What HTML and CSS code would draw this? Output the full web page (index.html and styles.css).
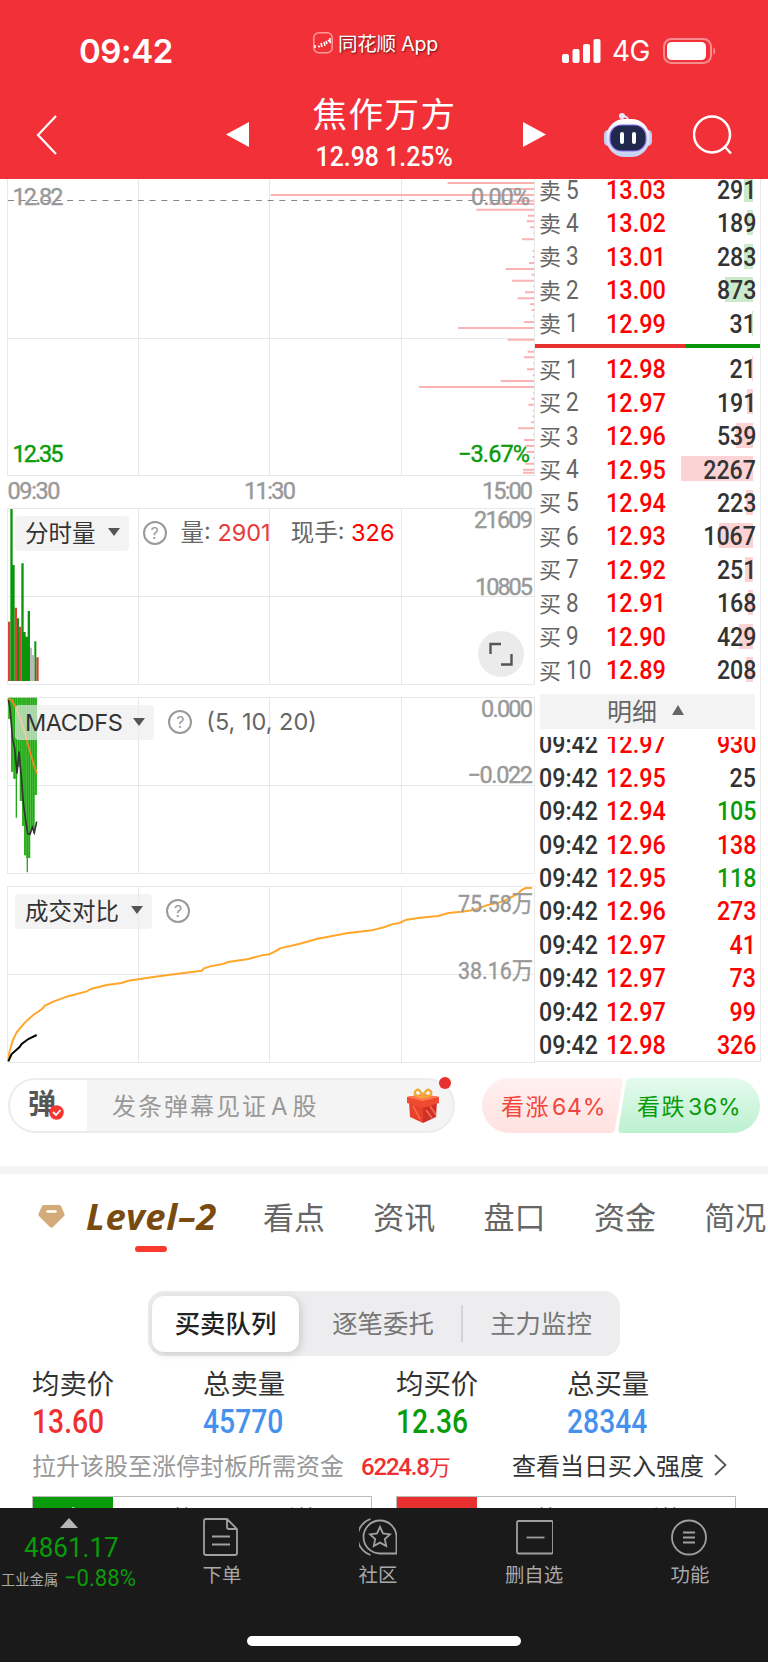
FILE: index.html
```html
<!DOCTYPE html>
<html lang="zh-CN">
<head>
    <meta charset="UTF-8">
    <meta name="viewport" content="width=device-width, initial-scale=1.0">
    <title>焦作万方</title>
    <link rel="stylesheet" href="styles.css">
</head>
<body>
    <header class="header">
        <div class="status">
            <div class="clock">09:42</div>
            <div class="app-name">
                <svg width="20" height="22" viewBox="0 0 20 22" fill="none" stroke="#fff">
                    <rect x=".8" y=".8" width="18.4" height="20" rx="5" stroke="#ff9a9c" stroke-width="1.5"/>
                    <path d="M2 13v3M5 14l2 1M8 11l1 4M11 10l1 4M13 9l1 3M17 6v4M15 8l3 3" stroke-width="1.6"/>
                </svg>
                <span>同花顺 App</span>
            </div>
            <div class="signal">
                <svg width="39" height="24" viewBox="0 0 39 24" fill="#fff">
                    <rect x="0" y="15" width="7" height="9" rx="2"/>
                    <rect x="10.5" y="10" width="7" height="14" rx="2"/>
                    <rect x="21" y="5" width="7" height="19" rx="2"/>
                    <rect x="31.5" y="0" width="7" height="24" rx="2"/>
                </svg>
                <span>4G</span>
                <svg width="53" height="26" viewBox="0 0 53 26">
                    <rect x="1" y="1" width="47" height="24" rx="7.5" fill="none" stroke="#fff" stroke-opacity=".45" stroke-width="2"/>
                    <rect x="4" y="4" width="39" height="18" rx="4.5" fill="#fff"/>
                    <path d="M50.500 9q3 4 0 8z" fill="#fff" fill-opacity=".6"/>
                </svg>
            </div>
        </div>
        <nav class="nav">
            <svg class="back" width="22" height="40" viewBox="0 0 22 40" fill="none" stroke="#fff" stroke-width="2.2"><path d="M20 1L2 20l18 19"/></svg>
            <svg class="prev" width="23" height="25" viewBox="0 0 23 25" fill="#fff"><path d="M23 0v25L0 12.500z"/></svg>
            <div class="stock">
                <h1>焦作万方</h1>
                <div class="quote num">12.98 1.25%</div>
            </div>
            <svg class="next" width="23" height="25" viewBox="0 0 23 25" fill="#fff"><path d="M0 0v25l23-12.500z"/></svg>
            <svg class="robot" width="48" height="44" viewBox="0 0 48 44">
                <defs>
                    <linearGradient id="head" x1="0" y1="0" x2="0" y2="1"><stop offset="0" stop-color="#fff"/><stop offset="1" stop-color="#c3d0f0"/></linearGradient>
                </defs>
                <path d="M24 9q1-6-6-6" fill="none" stroke="#dfe6fa" stroke-width="2"/>
                <circle cx="18" cy="3" r="3" fill="#e6ebfb"/>
                <rect x="0" y="17" width="9" height="16" rx="4.500" fill="#c3cdf0"/>
                <rect x="39" y="17" width="9" height="16" rx="4.500" fill="#c3cdf0"/>
                <rect x="2.500" y="6" width="43" height="38" rx="18" fill="url(#head)"/>
                <rect x="6" y="12" width="36" height="26" rx="11.500" fill="#20284d" stroke="#8a6cf0" stroke-width="1.200"/>
                <path d="M18 21v8M30 21v8" stroke="#fff" stroke-width="4" stroke-linecap="round"/>
            </svg>
            <svg class="search" width="42" height="42" viewBox="0 0 42 42" fill="none" stroke="#fff" stroke-width="2.500"><circle cx="19" cy="19.500" r="18"/><path d="M31 31l7 7.500"/></svg>
        </nav>
    </header>

    <main class="market">
        <section class="charts">
            <!-- price, with the volume distribution along the right edge -->
            <svg class="price-chart" width="535" height="329" viewBox="0 0 535 329">
                <path class="grid" d="M7.500 0V296.500H534.500V0M138.500 0V296M269.500 0V296M401.500 0V296M7.500 159.500H534"/>
                <path d="M8 21.500H534" stroke="#888" stroke-dasharray="6 5.800"/>
                <path transform="translate(370 -4) scale(.3333)" stroke="#fab2b2" stroke-width="6" d="M233 24H492M410 42H492M-298 60H492M415 77H492M357 87H492M319 104H492M474 122H492M470 139H492M481 157H492M490 175H492M456 193H492M488 228H492M488 246H492M477 264H492M407 282H492M485 299H492M426 317H492M490 334H492M465 352H492M443 370H492M480 388H492M485 405H492M490 423H492M462 441H492M264 459H492M413 494H492M473 530H492M462 547H492M490 565H492M471 583H492M488 601H492M392 618H492M147 636H492M490 654H492M485 671H492M475 689H492M490 707H492M488 724H492M484 742H492M444 760H492M490 778H492M462 795H492M466 813H492M470 831H492M489 849H492M465 866H492M459 884H492M459 893H492"/>
                <g class="axis">
                    <text x="12.500" y="25.500" textLength="51">12.82</text>
                    <text x="471" y="25.500" textLength="59">0.00%</text>
                    <text class="down" x="12.500" y="282.500" textLength="51">12.35</text>
                    <text class="down" x="458" y="282.500" textLength="72">−3.67%</text>
                    <text x="7.500" y="320" textLength="53">09:30</text>
                    <text x="244" y="320" textLength="52">11:30</text>
                    <text x="482" y="320" textLength="51">15:00</text>
                </g>
            </svg>

            <div class="panel">
                <svg width="535" height="177" viewBox="0 0 535 177">
                    <path class="grid" d="M7.500 .5H534.500V176.500H7.500zM138.500 0V176M269.500 0V176M401.500 0V176M7.500 88.500H534"/>
                    <g transform="translate(0 -8) scale(.3333)">
                        <path fill="#e03c38" d="M24 365h7v178h-7zM44 323h7v220h-7zM57 380h7v163h-7zM109 472h7v71h-7z"/>
                        <path fill="#0a960a" d="M31 27h7v516h-7zM38 195h6v348h-6zM51 355h6v188h-6zM64 190h7v353h-7zM71 396h6v147h-6zM77 410h6v133h-6zM83 333h7v210h-7zM103 424h6v119h-6z"/>
                        <path fill="#b9b9b9" d="M90 443h6v100h-6zM96 465h7v78h-7z"/>
                    </g>
                    <g class="axis">
                        <text x="474" y="19.500" textLength="59">21609</text>
                        <text x="475" y="86.500" textLength="58">10805</text>
                    </g>
                </svg>
                <div class="tools">
                    <button class="pick">分时量 <i></i></button>
                    <span class="help">?</span>
                    <span class="info">量: <b class="soft">2901</b></span>
                    <span class="info now">现手: <b>326</b></span>
                </div>
                <div class="expand">
                    <svg width="24" height="24" viewBox="0 0 24 24" fill="none" stroke="#555" stroke-width="2.400"><path d="M1.500 12V2H12M22.500 12v10.500H12"/></svg>
                </div>
            </div>

            <div class="panel">
                <svg width="535" height="177" viewBox="0 0 535 177">
                    <path class="grid" d="M7.500 .5H534.500V176.500H7.500zM138.500 0V176M269.500 0V176M401.500 0V176M7.500 88.500H534"/>
                    <g transform="translate(0 -197) scale(.3333)" fill="none">
                        <path fill="#52bf45" d="M24 593H111V885H104V990H91V1074H78V1066H72V977H66V903H59V800H52V836H40V815H33V657H24z"/>
                        <path stroke="#21a916" stroke-width="4" d="M30 593V657M36 593V815M43 593V836M49 593V953M56 593V800M62 593V903M69 593V977M75 593V1066M82 593V1117M88 593V1074M95 593V990M101 593V1000M108 593V885"/>
                        <path stroke="#333" stroke-width="5" d="M25 598L30 625 38 720 44 745 51 820 57 755 64 830 70 910 77 960 83 1001 90 1003 97 982 103 998 110 965"/>
                        <path stroke="#ff8518" stroke-width="5" d="M25 597L35 600 45 618 60 655 75 700 90 755 100 790 111 821"/>
                    </g>
                    <g class="axis">
                        <text x="481" y="19.500" textLength="52">0.000</text>
                        <text x="467.500" y="86" textLength="65.500">−0.022</text>
                    </g>
                </svg>
                <div class="tools">
                    <button class="pick latin">MACDFS <i></i></button>
                    <span class="help">?</span>
                    <span class="info">(5, 10, 20)</span>
                </div>
            </div>

            <div class="panel">
                <svg width="535" height="177" viewBox="0 0 535 177">
                    <path class="grid" d="M7.500 .5H534.500V176.500H7.500zM138.500 0V176M269.500 0V176M401.500 0V176M7.500 88.500H534"/>
                    <g transform="translate(0 -15.300) scale(.3333)" fill="none" stroke-width="6">
                        <path stroke="#ffa62b" d="M25 570L28 545 38 510 50 485 75 455 100 433 125 416 135 405 160 393 200 378 260 362 275 354 320 343 365 337 385 330 455 320 510 312 605 300 612 293 630 287 665 281 685 274 745 265 785 254 808 251 830 240 840 233 900 219 950 205 1040 188 1115 179 1155 169 1175 161 1198 157 1220 147 1260 141 1315 136 1345 127 1385 123 1425 117 1460 104 1510 92 1555 68 1565 58 1577 52 1596 52"/>
                        <path stroke="#000" d="M25 572L35 550 58 530 65 520 85 505 110 493"/>
                    </g>
                    <g class="axis">
                        <text x="458" y="26" textLength="75" lengthAdjust="spacingAndGlyphs">75.58万</text>
                        <text x="458" y="92.500" textLength="75" lengthAdjust="spacingAndGlyphs">38.16万</text>
                    </g>
                </svg>
                <div class="tools">
                    <button class="pick">成交对比 <i></i></button>
                    <span class="help">?</span>
                </div>
            </div>
        </section>

        <aside class="book">
            <div class="asks">
                <div class="row"><label>卖<span>5</span></label><b class="num">13.03</b><em class="num">291</em><i style="width:9px"></i></div>
                <div class="row"><label>卖<span>4</span></label><b class="num">13.02</b><em class="num">189</em><i style="width:6px"></i></div>
                <div class="row"><label>卖<span>3</span></label><b class="num">13.01</b><em class="num">283</em><i style="width:9px"></i></div>
                <div class="row"><label>卖<span>2</span></label><b class="num">13.00</b><em class="num">873</em><i style="width:28px"></i></div>
                <div class="row"><label>卖<span>1</span></label><b class="num">12.99</b><em class="num">31</em><i style="width:1px"></i></div>
            </div>
            <div class="ratio"></div>
            <div class="bids">
                <div class="row"><label>买<span>1</span></label><b class="num">12.98</b><em class="num">21</em><i style="width:1px"></i></div>
                <div class="row"><label>买<span>2</span></label><b class="num">12.97</b><em class="num">191</em><i style="width:6px"></i></div>
                <div class="row"><label>买<span>3</span></label><b class="num">12.96</b><em class="num">539</em><i style="width:17px"></i></div>
                <div class="row"><label>买<span>4</span></label><b class="num">12.95</b><em class="num">2267</em><i style="width:72px"></i></div>
                <div class="row"><label>买<span>5</span></label><b class="num">12.94</b><em class="num">223</em><i style="width:7px"></i></div>
                <div class="row"><label>买<span>6</span></label><b class="num">12.93</b><em class="num">1067</em><i style="width:34px"></i></div>
                <div class="row"><label>买<span>7</span></label><b class="num">12.92</b><em class="num">251</em><i style="width:8px"></i></div>
                <div class="row"><label>买<span>8</span></label><b class="num">12.91</b><em class="num">168</em><i style="width:5px"></i></div>
                <div class="row"><label>买<span>9</span></label><b class="num">12.90</b><em class="num">429</em><i style="width:14px"></i></div>
                <div class="row"><label>买<span>10</span></label><b class="num">12.89</b><em class="num">208</em><i style="width:7px"></i></div>
            </div>
            <div class="detail-head">明细 <i></i></div>
            <div class="ticks">
                <div class="row"><label class="num">09:42</label><b class="num">12.97</b><em class="num up">930</em></div>
                <div class="row"><label class="num">09:42</label><b class="num">12.95</b><em class="num">25</em></div>
                <div class="row"><label class="num">09:42</label><b class="num">12.94</b><em class="num fall">105</em></div>
                <div class="row"><label class="num">09:42</label><b class="num">12.96</b><em class="num up">138</em></div>
                <div class="row"><label class="num">09:42</label><b class="num">12.95</b><em class="num fall">118</em></div>
                <div class="row"><label class="num">09:42</label><b class="num">12.96</b><em class="num up">273</em></div>
                <div class="row"><label class="num">09:42</label><b class="num">12.97</b><em class="num up">41</em></div>
                <div class="row"><label class="num">09:42</label><b class="num">12.97</b><em class="num up">73</em></div>
                <div class="row"><label class="num">09:42</label><b class="num">12.97</b><em class="num up">99</em></div>
                <div class="row"><label class="num">09:42</label><b class="num">12.98</b><em class="num up">326</em></div>
            </div>
        </aside>
    </main>

    <section class="social">
        <div class="danmu">
            <div class="danmu-switch">弹
                <svg class="check" width="15" height="15" viewBox="0 0 15 15"><circle cx="7.500" cy="7.500" r="7.300" fill="#f5372f"/><path d="M4 7l3 3 4.500-5" fill="none" stroke="#fff" stroke-width="1.800"/></svg>
            </div>
            <div class="danmu-input">发条弹幕见证<span>A</span>股</div>
            <svg class="gift" width="34" height="36" viewBox="0 0 34 36">
                <path d="M3 13l14 4v18L4 29z" fill="#e8402c"/>
                <path d="M31 13l-14 4v18l13-6z" fill="#cf2f28"/>
                <path d="M1 9l16-3 16 3v6l-16 5L1 15z" fill="#f04a31"/>
                <path d="M1 9l16-3 16 3-16 4z" fill="#ff7a4f"/>
                <path d="M7 18l7 13M20 22l6 8M24 18l6 9" stroke="#f5724d" stroke-width="1.500"/>
                <path d="M17 9C11 9 7 6 9.500 3s6 0 7.500 6c1.500-6 5-9 7.500-6S23 9 17 9z" fill="none" stroke="#f0ab35" stroke-width="2.400"/>
            </svg>
            <span class="dot"></span>
        </div>
        <div class="vote">
            <svg class="vote-bg" width="278" height="55" viewBox="0 0 278 55">
                <defs>
                    <linearGradient id="bull" x1="0" y1="0" x2="0" y2="1"><stop offset="0" stop-color="#fff1f0"/><stop offset="1" stop-color="#ffe2e0"/></linearGradient>
                    <linearGradient id="bear" x1="0" y1="0" x2="0" y2="1"><stop offset="0" stop-color="#e4fbee"/><stop offset="1" stop-color="#bdf0d0"/></linearGradient>
                </defs>
                <path fill="url(#bull)" d="M27.500 0H137q4 0 3.500 4L133 51q-1 4-5 4H27.500a27.500 27.500 0 0 1 0-55z"/>
                <path fill="url(#bear)" d="M149 0H250.500a27.500 27.500 0 0 1 0 55H140q-4 0-3.500-4L144 4q1-4 5-4z"/>
            </svg>
            <span class="bull">看涨<small>64%</small></span>
            <span class="bear">看跌<small>36%</small></span>
        </div>
    </section>

    <section class="level">
        <div class="tabs">
            <svg width="27" height="24" viewBox="0 0 27 24"><path d="M6 0H21q1 0 2 1l3.500 8q.500 1-.500 2L15 22q-1.500 1.500-3 0L1 11q-1-1-.500-2L4 1q1-1 2-1z" fill="#d2ab78"/><path d="M9.500 6.500h8" stroke="#fff" stroke-width="2.400" stroke-linecap="round"/></svg>
            <a class="tab-level">Level–2</a>
            <a>看点</a>
            <a>资讯</a>
            <a>盘口</a>
            <a>资金</a>
            <a>简况</a>
        </div>
        <div class="segment">
            <a class="active">买卖队列</a>
            <a class="middle">逐笔委托</a>
            <a class="last">主力监控</a>
        </div>
        <div class="stats">
            <div><p>均卖价</p><span class="num sell-price">13.60</span></div>
            <div><p>总卖量</p><span class="num total">45770</span></div>
            <div><p>均买价</p><span class="num buy-price">12.36</span></div>
            <div><p>总买量</p><span class="num total">28344</span></div>
        </div>
        <div class="limit">
            <span>拉升该股至涨停封板所需资金</span>
            <b>6224.8<u>万</u></b>
            <a>查看当日买入强度</a>
            <svg width="13" height="24" viewBox="0 0 13 24" fill="none" stroke="#555" stroke-width="1.800"><path d="M1 2l10.500 10L1 22"/></svg>
        </div>
        <div class="queues">
            <div class="queue"><span class="side sell">卖</span><span class="q1">笔</span><span class="q2">手笔</span></div>
            <div class="queue"><span class="side buy"></span><span class="q1">笔</span><span class="q2">手笔</span></div>
        </div>
    </section>

    <footer class="bottom">
        <div class="menu">
            <div class="index">
                <i></i>
                <div class="num point">4861.17</div>
                <div class="sector"><span>工业金属</span><b class="num">−0.88%</b></div>
            </div>
            <div class="item">
                <svg width="38" height="38" viewBox="0 0 38 38"><path d="M3 1H24l10 10V35q0 2-2 2H3q-2 0-2-2V3q0-2 2-2zM24 1v8q0 2 2 2h8M9 18.500h18M9 26.500h18"/></svg>
                <span>下单</span>
            </div>
            <div class="item">
                <svg width="38" height="38" viewBox="0 0 38 38"><path d="M11.500 1a19 19 0 0 0 0 36M37.500 35.500V19A16.500 16.500 0 1 0 21 35.500z"/><path d="M21 9l3 6.500 7 .8-5.200 4.800 1.400 7L21 24.600l-6.200 3.500 1.400-7L11 16.300l7-.8z"/></svg>
                <span>社区</span>
            </div>
            <div class="item">
                <svg width="38" height="38" viewBox="0 0 38 38"><rect x="2" y="3" width="36" height="32.500" rx="1.500"/><path d="M11.500 19.500h18"/></svg>
                <span>删自选</span>
            </div>
            <div class="item">
                <svg width="38" height="38" viewBox="0 0 38 38"><circle cx="18" cy="19.500" r="17"/><path d="M12 14.500h12M12 19.500h12M12 24.500h12"/></svg>
                <span>功能</span>
            </div>
        </div>
        <div class="home-bar"></div>
    </footer>
</body>
</html>
```

FILE: styles.css
```css
* {
    box-sizing: border-box;
}
body {
    margin: 0;
    width: 768px;
    height: 1663px;
    overflow: hidden;
    background: #fff;
    color: #333;
    font-family: Inter, "Noto Sans CJK SC", sans-serif;
}
svg {
    display: block;
    flex: none;
}
i, em {
    font-style: normal;
}
.num {
    font-family: Roboto, "Noto Sans CJK SC", sans-serif;
    font-weight: 500;
}

/* header */
.header {
    height: 179px;
    background: #f23037;
    color: #fff;
}
.status {
    display: flex;
    align-items: flex-start;
    height: 90px;
    padding-left: 79px;
}
.clock {
    width: 234px;
    margin-top: 31px;
    font-size: 33px;
    line-height: 40px;
    font-weight: 600;
    letter-spacing: -.4px;
}
.app-name {
    display: flex;
    align-items: center;
    gap: 5px;
    width: 249px;
    margin-top: 31px;
    font-size: 19.500px;
    line-height: 26px;
    letter-spacing: -.2px;
    text-shadow: 1px 1px 2px rgba(0, 0, 0, .6);
    white-space: nowrap;
}
.app-name svg {
    margin-top: -2px;
}
.signal {
    display: flex;
    align-items: center;
    margin-top: 36px;
    height: 30px;
}
.signal span {
    width: 50px;
    padding-left: 11px;
    font-size: 28px;
    letter-spacing: -.5px;
}
.signal svg:last-child {
    margin-left: 12px;
}
.nav {
    display: flex;
    height: 89px;
    padding-left: 36px;
}
.back {
    margin-top: 25px;
}
.prev {
    margin: 32px 0 0 168px;
}
.stock {
    width: 274px;
    text-align: center;
}
.stock h1 {
    margin: 2px 0 0;
    padding-right: 3px;
    font-size: 34.500px;
    line-height: 46px;
    font-weight: 400;
    letter-spacing: 1.500px;
}
.quote {
    font-size: 27px;
    line-height: 30px;
    margin-top: 4px;
    padding-right: 4px;
    white-space: nowrap;
    transform: scaleX(.92);
}
.next {
    margin-top: 32px;
}
.robot {
    margin: 23px 0 0 58px;
}
.search {
    margin: 25px 0 0 41px;
}

/* charts */
.market {
    display: flex;
    height: 883px;
}
.charts {
    width: 535px;
    display: flex;
    flex-direction: column;
}
.price-chart {
    flex: none;
}
.grid {
    fill: none;
    stroke: #e8e8e8;
}
.axis text {
    font-family: Roboto, "Noto Sans CJK SC", sans-serif;
    font-size: 23.500px;
    fill: #999;
    stroke: #999;
    stroke-width: .4px;
}
.axis .down {
    fill: #0a9b0a;
    stroke: #0a9b0a;
}
.panel {
    position: relative;
    height: 177px;
    margin-bottom: 12px;
}
.tools {
    position: absolute;
    left: 15px;
    top: 7.500px;
    display: flex;
    align-items: center;
    height: 35px;
    white-space: nowrap;
}
.pick {
    display: flex;
    align-items: center;
    gap: 12px;
    height: 35px;
    padding: 0 9px 2px 10px;
    border: 0;
    border-radius: 4px;
    background: rgba(236, 236, 236, .65);
    color: #333;
    font: 23.500px Inter, "Noto Sans CJK SC", sans-serif;
}
.latin {
    gap: 11px;
    padding-bottom: 0;
    letter-spacing: -.4px;
}
.pick i {
    border: 6px solid transparent;
    border-top: 8px solid #555;
    border-bottom: 0;
}
.help {
    width: 24px;
    height: 24px;
    margin: 0 14px;
    border: 2px solid #999;
    border-radius: 50%;
    color: #999;
    font-size: 16px;
    line-height: 20px;
    text-align: center;
}
.info {
    color: #666;
    font-size: 23.500px;
    line-height: 32px;
}
.info b {
    color: #f00;
    font-weight: 400;
}
.info .soft {
    color: #e83a3a;
}
.now {
    margin-left: 20px;
}
.expand {
    position: absolute;
    right: 11px;
    bottom: 8px;
    display: flex;
    align-items: center;
    justify-content: center;
    width: 46px;
    height: 46px;
    border-radius: 50%;
    background: #ebebeb;
}

/* order book */
.book {
    width: 226px;
    border-right: 1px solid #e8e8e8;
    border-bottom: 1px solid #e8e8e8;
}
.asks, .ticks {
    display: flex;
    flex-direction: column;
    justify-content: flex-end;
    overflow: hidden;
}
.asks {
    height: 161px;
}
.ratio {
    height: 4px;
    margin: 4px 0;
    background: linear-gradient(to right, #e83030 150px, #0a960a 150px);
}
.row {
    position: relative;
    display: flex;
    flex: none;
    align-items: center;
    height: 33.440px;
    padding: 2px 4px 0 4px;
    font-size: 25.500px;
    line-height: 33px;
}
.row label {
    width: 67px;
    color: #333;
    transform: scaleX(.91);
    transform-origin: left;
}
.asks label, .bids label {
    color: #666;
    font-size: 22px;
    transform: none;
}
.row label span {
    display: inline-block;
    margin-left: 5px;
    font-family: Roboto, sans-serif;
    font-size: 25px;
    transform: scaleX(.9);
    transform-origin: left;
}
.row b {
    color: #f00;
    transform: scaleX(.92);
    transform-origin: left;
}
.row em {
    position: relative;
    z-index: 1;
    margin-left: auto;
    transform: scaleX(.91);
    transform-origin: right;
}
.row .up {
    color: #f00;
}
.row .fall {
    color: #0a9b0a;
}
/* size bar behind the volume */
.row i {
    position: absolute;
    right: 7px;
    top: 4px;
    height: 25px;
    background: #fbd3d5;
}
.asks i {
    background: #cbe9cb;
}
.detail-head {
    display: flex;
    align-items: center;
    gap: 15px;
    width: 215px;
    height: 35px;
    margin: 8px 0 8px 5px;
    padding: 0 0 3px 67px;
    background: #f3f3f3;
    color: #666;
    font-size: 25px;
}
.detail-head i {
    border: 6.500px solid transparent;
    border-top: 0;
    border-bottom: 10px solid #666;
}
.ticks {
    height: 324px;
}

/* danmu + vote */
.social {
    display: flex;
    justify-content: space-between;
    height: 112px;
    padding: 16px 8px 0;
    border-bottom: 8px solid #f3f3f3;
}
.danmu {
    position: relative;
    display: flex;
    align-items: center;
    width: 447px;
    height: 55px;
    border: 2px solid #ececec;
    border-radius: 28px;
    background: linear-gradient(to right, #fff 77px, #f4f4f4 77px);
}
.danmu-switch {
    position: relative;
    width: 77px;
    padding: 0 0 4px 18px;
    color: #555;
    font-size: 28px;
    line-height: 40px;
    font-weight: 700;
}
.check {
    position: absolute;
    left: 39px;
    top: 21px;
}
.danmu-input {
    flex: 1;
    padding: 0 0 2px 25px;
    color: #999;
    font-size: 24px;
    letter-spacing: 2px;
}
.danmu-input span {
    margin: 0 3px;
}
.gift {
    margin-right: 13px;
}
.dot {
    position: absolute;
    right: 2px;
    top: -3px;
    width: 12px;
    height: 12px;
    border-radius: 50%;
    background: #e83030;
}
.vote {
    position: relative;
    display: flex;
    align-items: center;
    width: 278px;
    height: 55px;
    padding-bottom: 2px;
    font-size: 23px;
    letter-spacing: 1.500px;
    white-space: nowrap;
}
.vote-bg {
    position: absolute;
    left: 0;
    top: 0;
}
.vote span {
    position: relative;
    padding-left: 19px;
}
.vote small {
    margin-left: 2px;
    font-size: 23px;
    letter-spacing: .8px;
}
.bull {
    width: 136px;
    color: #f5443c;
}
.bear {
    color: #0a9b0a;
}

/* level-2 */
.tabs {
    display: flex;
    align-items: center;
    height: 117px;
    padding: 0 0 34px 38px;
    white-space: nowrap;
}
.tabs a {
    width: 110.300px;
    color: #666;
    font-size: 31px;
    flex: none;
}
.tabs a:last-child {
    width: auto;
}
.tabs svg {
    margin-top: 2px;
}
.tabs .tab-level {
    position: relative;
    width: 198px;
    padding-left: 21px;
    color: #7a4b10;
    font-family: "Noto Sans", sans-serif;
    font-size: 36.500px;
    font-style: italic;
    font-weight: 700;
    letter-spacing: .7px;
}
.tab-level::after {
    content: "";
    position: absolute;
    left: 70px;
    bottom: -11px;
    width: 32px;
    height: 6px;
    border-radius: 3px;
    background: #fb3a2f;
}
.segment {
    display: flex;
    align-items: center;
    width: 472px;
    height: 65px;
    margin-left: 148px;
    padding: 4px;
    border-radius: 16px;
    background: #ededef;
    color: #777;
    font-size: 25.400px;
    text-align: center;
}
.segment a {
    line-height: 37px;
}
.segment .active {
    flex: 0 0 147px;
    line-height: 56px;
    border-radius: 12px;
    background: #fff;
    box-shadow: 2px 2px 8px rgba(0, 0, 0, .15);
    color: #222;
    font-weight: 500;
}
.segment .middle {
    width: 162px;
    padding-left: 6px;
}
.segment .last {
    width: 155px;
    padding-left: 3px;
    border-left: 2px solid #d4d4d6;
}
.stats {
    display: grid;
    grid-template-columns: 171px 193px 171px 1fr;
    height: 84px;
    padding: 8px 0 0 32px;
}
.stats p {
    margin: 0;
    font-size: 27.400px;
    line-height: 40px;
}
.stats span {
    display: block;
    font-size: 32.500px;
    line-height: 36px;
    transform: scaleX(.87);
    transform-origin: left;
}
.sell-price {
    color: #ee3030;
}
.buy-price {
    color: #0a9b0a;
}
.total {
    color: #4691ee;
}
.limit {
    display: flex;
    align-items: center;
    height: 52px;
    padding: 0 0 3px 32px;
    font-size: 24px;
    white-space: nowrap;
}
.limit span {
    width: 329px;
    color: #999;
}
.limit b {
    width: 151px;
    color: #ee3030;
    font: 500 24px Roboto, "Noto Sans CJK SC", sans-serif;
    letter-spacing: -1.200px;
}
.limit u {
    text-decoration: none;
    font-size: 22px;
    font-weight: 400;
}
.limit svg {
    margin-left: 10px;
}
.queues {
    display: flex;
    gap: 24px;
    height: 16px;
    padding: 4px 0 0 32px;
    overflow: hidden;
}
.queue {
    display: flex;
    width: 340px;
    height: 40px;
    border: 1px solid #bbb;
    font-size: 22px;
    line-height: 42px;
    color: #222;
}
.side {
    width: 80px;
    text-align: center;
    color: #fff;
}
.sell {
    background: #0a9b0a;
}
.buy {
    background: #e83030;
}
.q1 {
    width: 82px;
    text-align: right;
}
.q2 {
    width: 124px;
    text-align: right;
}

/* bottom bar */
.bottom {
    height: 154px;
    background: #1a1a1a;
    color: #a8a8a8;
}
.menu {
    display: grid;
    grid-template-columns: 144px repeat(4, 156px);
    height: 128px;
}
.index {
    padding-top: 10px;
}
.index i {
    display: block;
    width: 0;
    margin-left: 60px;
    border: 9px solid transparent;
    border-top: 0;
    border-bottom: 10px solid #b5b5b5;
}
.point {
    margin: 3px 0 0 24px;
    color: #0a9b0a;
    font-size: 28px;
    line-height: 34px;
    font-weight: 400;
    transform: scaleX(.93);
    transform-origin: left;
}
.sector {
    display: flex;
    align-items: center;
    gap: 6px;
    margin-top: -4px;
    padding-left: 1px;
    font-size: 14.300px;
    line-height: 30px;
    white-space: nowrap;
}
.sector span {
    margin-top: 4px;
}
.sector b {
    color: #0a9b0a;
    font-size: 24px;
    font-weight: 400;
    transform: scaleX(.92);
    transform-origin: left;
}
.item {
    display: flex;
    flex-direction: column;
    align-items: center;
    padding-top: 10px;
    font-size: 19.400px;
}
.item svg {
    fill: none;
    stroke: #a0a0a0;
    stroke-width: 1.800;
}
.item span {
    margin-top: 5px;
    line-height: 28px;
}
.home-bar {
    width: 274px;
    height: 10px;
    margin: 0 auto;
    border-radius: 5px;
    background: #fff;
}
```
